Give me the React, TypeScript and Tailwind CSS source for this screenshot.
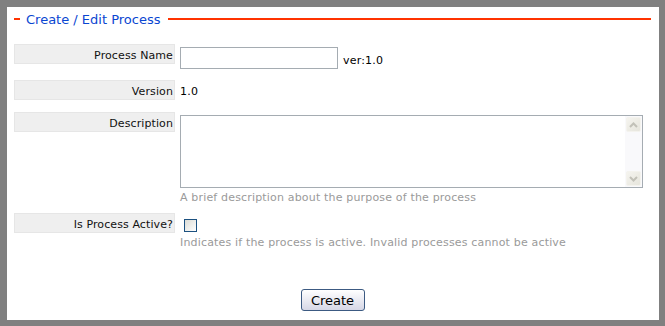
import { useState } from "react";

function ScrollButton({ up }: { up?: boolean }) {
  return (
    <div className="w-[15px] h-[15px] rounded-[2px] border border-[#f4f3ee] bg-gradient-to-br from-[#f5f4ef] to-[#e6e5dc] flex items-center justify-center">
      <svg width="9" height="6" viewBox="0 0 9 6">
        <path
          d={up ? "M1 5 L4.5 1.5 L8 5" : "M1 1 L4.5 4.5 L8 1"}
          fill="none"
          stroke="#c2c1b8"
          strokeWidth="2"
        />
      </svg>
    </div>
  );
}

function Label({ children }: { children: React.ReactNode }) {
  return (
    <div className="w-[161px] h-[20px] shrink-0 border border-[#e6e6e6] bg-[#efefef] flex items-center justify-end pr-[1px] pt-[4px] text-[11px] leading-[14px] text-[#111] tracking-[0.1px]">
      {children}
    </div>
  );
}

export default function App() {
  const [name, setName] = useState("");
  const [active, setActive] = useState(false);

  return (
    <div className="w-[665px] h-[326px] bg-white border-l-[7px] border-t-[7px] border-r-[6px] border-b-[6px] border-[#808080] font-['DejaVu_Sans',Verdana,sans-serif] flex flex-col pl-[7px] pr-[8px]">
      <div className="h-[24px] flex items-center">
        <div className="w-[6px] h-[2px] bg-[#ff3300]" />
        <span className="ml-[6px] text-[13px] leading-none text-[#0a46d1] whitespace-nowrap">Create / Edit Process</span>
        <div className="ml-[8px] flex-1 h-[2px] bg-[#ff3300]" />
      </div>

      <div className="mt-[13px] flex">
        <Label>Process Name</Label>
        <div className="ml-[5px] mt-[3px] h-[22px] flex items-center">
          <input
            value={name}
            onChange={(e) => setName(e.target.value)}
            className="w-[158px] h-[22px] border border-[#a5acb2] outline-none px-1 text-[11px]"
          />
          <span className="ml-[5px] mt-[5px] text-[11px] leading-[16px] text-black tracking-[0.2px]">ver:1.0</span>
        </div>
      </div>

      <div className="mt-[11px] flex">
        <Label>Version</Label>
        <div className="ml-[5px] h-[20px] pt-[4px] text-[11px] leading-[16px] text-black tracking-[0.2px]">1.0</div>
      </div>

      <div className="mt-[12px] flex">
        <Label>Description</Label>
        <div className="ml-[5px] mt-[3px] flex flex-col">
          <div className="w-[463px] h-[73px] border border-[#a5acb2] flex">
            <textarea className="flex-1 resize-none outline-none text-[11px] p-1" />
            <div className="w-[17px] bg-[#f9f9fb] flex flex-col justify-between items-center py-[1px]">
              <ScrollButton up />
              <ScrollButton />
            </div>
          </div>
          <div className="mt-[2px] text-[11px] leading-[16px] text-[#9a9a9a] tracking-[0.17px]">
            A brief description about the purpose of the process
          </div>
        </div>
      </div>

      <div className="mt-[7px] flex">
        <Label>Is Process Active?</Label>
        <div className="ml-[5px] flex flex-col">
          <button
            onClick={() => setActive(!active)}
            className="ml-[4px] mt-[6px] w-[13px] h-[13px] border border-[#1c5180] bg-gradient-to-br from-[#dcdcd5] to-white flex items-center justify-center"
          >
            {active && (
              <svg width="9" height="9" viewBox="0 0 9 9">
                <path d="M1 4 L3.5 6.5 L8 1.5" fill="none" stroke="#21a121" strokeWidth="2" />
              </svg>
            )}
          </button>
          <div className="mt-[3px] text-[11px] leading-[16px] text-[#9a9a9a] tracking-[0.17px]">
            Indicates if the process is active. Invalid processes cannot be active
          </div>
        </div>
      </div>

      <div className="mt-[38px] flex justify-center">
        <button className="w-[64px] h-[22px] rounded-[3px] border border-[#3c5a82] bg-gradient-to-b from-white to-[#d6d7e6] text-[13px] leading-none text-black">
          Create
        </button>
      </div>
    </div>
  );
}
